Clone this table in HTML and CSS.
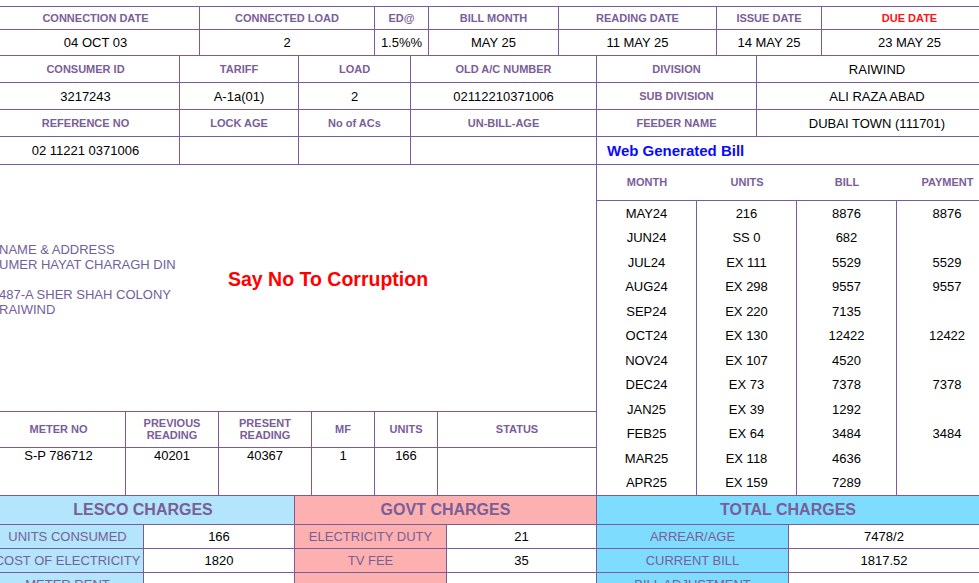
FILE: index.html
```html
<!DOCTYPE html>
<html>
<head>
<meta charset="utf-8">
<title>LESCO Bill</title>
<link rel="stylesheet" href="styles.css">
</head>
<body>
<div class="bill">
  <div class="grid g1">
    <div class="c lbl">CONNECTION DATE</div>
    <div class="c lbl">CONNECTED LOAD</div>
    <div class="c lbl">ED@</div>
    <div class="c lbl">BILL MONTH</div>
    <div class="c lbl">READING DATE</div>
    <div class="c lbl">ISSUE DATE</div>
    <div class="c lbl due">DUE DATE</div>
    <div class="c val">04 OCT 03</div>
    <div class="c val">2</div>
    <div class="c val">1.5%%</div>
    <div class="c val">MAY 25</div>
    <div class="c val">11 MAY 25</div>
    <div class="c val">14 MAY 25</div>
    <div class="c val">23 MAY 25</div>
  </div>

  <div class="grid g2">
    <div class="c lbl">CONSUMER ID</div>
    <div class="c lbl">TARIFF</div>
    <div class="c lbl">LOAD</div>
    <div class="c lbl">OLD A/C NUMBER</div>
    <div class="c lbl">DIVISION</div>
    <div class="c val big">RAIWIND</div>

    <div class="c val">3217243</div>
    <div class="c val">A-1a(01)</div>
    <div class="c val">2</div>
    <div class="c val">02112210371006</div>
    <div class="c lbl">SUB DIVISION</div>
    <div class="c val big">ALI RAZA ABAD</div>

    <div class="c lbl">REFERENCE NO</div>
    <div class="c lbl">LOCK AGE</div>
    <div class="c lbl">No of ACs</div>
    <div class="c lbl">UN-BILL-AGE</div>
    <div class="c lbl">FEEDER NAME</div>
    <div class="c val big">DUBAI TOWN (111701)</div>

    <div class="c val">02 11221 0371006</div>
    <div class="c"></div>
    <div class="c"></div>
    <div class="c"></div>
    <div class="c web">Web Generated Bill</div>
  </div>

  <div class="middle">
    <div class="left">
      <div class="info">
        <div class="addr">NAME &amp; ADDRESS<br>UMER HAYAT CHARAGH DIN<br><br>487-A SHER SHAH COLONY<br>RAIWIND</div>
        <div class="slogan">Say No To Corruption</div>
      </div>
      <div class="grid meter">
        <div class="c lbl">METER NO</div>
        <div class="c lbl">PREVIOUS<br>READING</div>
        <div class="c lbl">PRESENT<br>READING</div>
        <div class="c lbl">MF</div>
        <div class="c lbl">UNITS</div>
        <div class="c lbl">STATUS</div>
        <div class="c val top">S-P 786712</div>
        <div class="c val top">40201</div>
        <div class="c val top">40367</div>
        <div class="c val top">1</div>
        <div class="c val top">166</div>
        <div class="c val top"></div>
      </div>
    </div>

    <div class="history">
      <div class="hhead">
        <div class="lbl">MONTH</div>
        <div class="lbl">UNITS</div>
        <div class="lbl">BILL</div>
        <div class="lbl">PAYMENT</div>
      </div>
      <div class="hbody">
        <div class="hcol">
          <div>MAY24</div><div>JUN24</div><div>JUL24</div><div>AUG24</div><div>SEP24</div><div>OCT24</div>
          <div>NOV24</div><div>DEC24</div><div>JAN25</div><div>FEB25</div><div>MAR25</div><div>APR25</div>
        </div>
        <div class="hcol">
          <div>216</div><div>SS 0</div><div>EX 111</div><div>EX 298</div><div>EX 220</div><div>EX 130</div>
          <div>EX 107</div><div>EX 73</div><div>EX 39</div><div>EX 64</div><div>EX 118</div><div>EX 159</div>
        </div>
        <div class="hcol">
          <div>8876</div><div>682</div><div>5529</div><div>9557</div><div>7135</div><div>12422</div>
          <div>4520</div><div>7378</div><div>1292</div><div>3484</div><div>4636</div><div>7289</div>
        </div>
        <div class="hcol">
          <div>8876</div><div></div><div>5529</div><div>9557</div><div></div><div>12422</div>
          <div></div><div>7378</div><div></div><div>3484</div><div></div><div></div>
        </div>
      </div>
    </div>
  </div>

  <div class="charges">
    <div class="chg lesco">
      <div class="c chead">LESCO CHARGES</div>
      <div class="c clbl">UNITS CONSUMED</div><div class="c cval">166</div>
      <div class="c clbl">COST OF ELECTRICITY</div><div class="c cval">1820</div>
      <div class="c clbl">METER RENT</div><div class="c cval"></div>
    </div>
    <div class="chg govt">
      <div class="c chead">GOVT CHARGES</div>
      <div class="c clbl">ELECTRICITY DUTY</div><div class="c cval">21</div>
      <div class="c clbl">TV FEE</div><div class="c cval">35</div>
      <div class="c clbl"></div><div class="c cval"></div>
    </div>
    <div class="chg total">
      <div class="c chead">TOTAL CHARGES</div>
      <div class="c clbl">ARREAR/AGE</div><div class="c cval">7478/2</div>
      <div class="c clbl">CURRENT BILL</div><div class="c cval">1817.52</div>
      <div class="c clbl">BILL ADJUSTMENT</div><div class="c cval"></div>
    </div>
  </div>
</div>
</body>
</html>
```

FILE: styles.css
```css
html, body {
  margin: 0;
  padding: 0;
  overflow: hidden;
  background: #ffffff;
}

body {
  font-family: "Liberation Sans", Arial, sans-serif;
  color: #000;
}

.bill {
  width: 1006px;
  margin: 6px 0 0 -8px;
}

.grid {
  display: grid;
}

.c {
  box-sizing: border-box;
  border-right: 1px solid #7b5b9a;
  border-bottom: 1px solid #7b5b9a;
  display: flex;
  align-items: center;
  justify-content: center;
  text-align: center;
  overflow: hidden;
  white-space: nowrap;
}

.lbl {
  font-size: 11px;
  font-weight: bold;
  color: #7a5e98;
  line-height: 12px;
}

.due {
  color: #ff1414;
}

.val {
  font-size: 13px;
}

.g1 {
  border-top: 1px solid #7b5b9a;
  grid-template-columns: 208px 175px 54px 130px 158px 105px 176px;
  grid-template-rows: 23px 26px;
}

.g2 {
  grid-template-columns: 188px 119px 112px 186px 160px 241px;
  grid-template-rows: 27px 27px 27px 28px;
}

.web {
  grid-column: span 2;
  justify-content: flex-start;
  padding-left: 10px;
  font-size: 15px;
  font-weight: bold;
  color: #0a0aff;
}

.middle {
  display: flex;
  height: 331px;
}

.left {
  width: 605px;
  display: flex;
  flex-direction: column;
}

.info {
  box-sizing: border-box;
  height: 246px;
  border-right: 1px solid #7b5b9a;
  display: flex;
  align-items: center;
  padding: 0 0 18px 7px;
}

.addr {
  width: 229px;
  font-size: 13px;
  line-height: 15px;
  color: #72609a;
  white-space: nowrap;
}

.slogan {
  font-size: 19.5px;
  font-weight: bold;
  color: #ff0000;
}

.meter {
  border-top: 1px solid #7b5b9a;
  grid-template-columns: 134px 93px 93px 63px 63px 159px;
  grid-template-rows: 36px 48px;
}

.meter .lbl {
  padding-bottom: 1px;
}

.meter .c.top {
  align-items: flex-start;
  padding-top: 0;
}

.history {
  width: 401px;
}

.hhead {
  display: grid;
  grid-template-columns: 100px 100px 100px 101px;
  height: 36px;
  box-sizing: border-box;
  border-bottom: 1px solid #7b5b9a;
  border-right: 1px solid #7b5b9a;
}

.hhead .lbl {
  display: flex;
  align-items: center;
  justify-content: center;
  padding-bottom: 1px;
}

.hbody {
  display: grid;
  grid-template-columns: 100px 100px 100px 101px;
  height: 295px;
}

.hcol {
  box-sizing: border-box;
  border-right: 1px solid #7b5b9a;
  border-bottom: 1px solid #7b5b9a;
  display: grid;
  grid-template-rows: repeat(12, 24.5px);
  font-size: 13px;
  text-align: center;
}

.hcol div {
  display: flex;
  align-items: center;
  justify-content: center;
}

.charges {
  display: grid;
  grid-template-columns: 303px 302px 383px;
}

.chg {
  display: grid;
  grid-template-rows: 29px 24px 24px 24px;
}

.lesco {
  grid-template-columns: 152px 151px;
}

.govt {
  grid-template-columns: 152px 150px;
}

.total {
  grid-template-columns: 192px 191px;
}

.chead {
  grid-column: span 2;
  font-size: 16px;
  font-weight: bold;
  color: #7a5e98;
}

.clbl {
  font-size: 13px;
  color: #7a5e98;
}

.cval {
  font-size: 13px;
  background: #ffffff;
}

.lesco .chead,
.lesco .clbl {
  background: #b3e5fc;
}

.govt .chead,
.govt .clbl {
  background: #fdb0b0;
}

.total .chead,
.total .clbl {
  background: #7edcff;
}
```
